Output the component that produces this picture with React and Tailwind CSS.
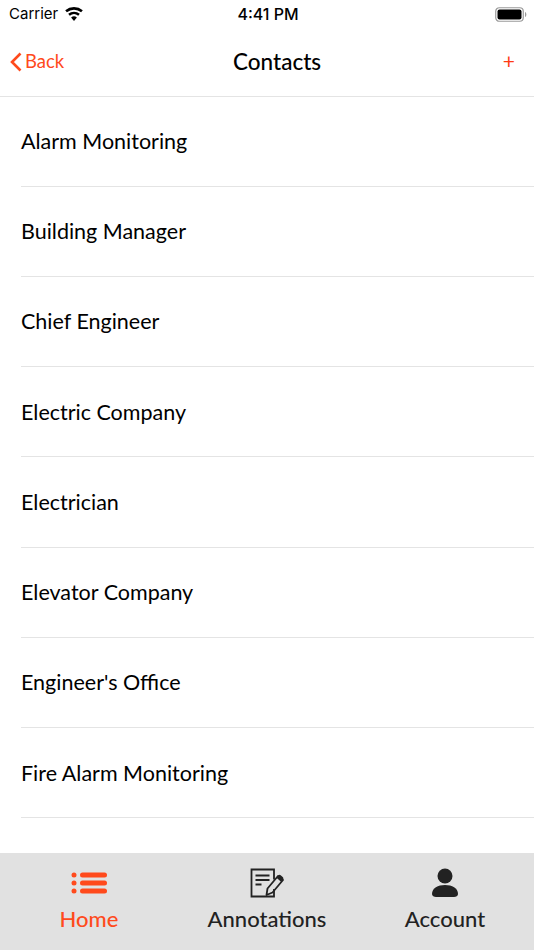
const CONTACTS = [
  "Alarm Monitoring",
  "Building Manager",
  "Chief Engineer",
  "Electric Company",
  "Electrician",
  "Elevator Company",
  "Engineer's Office",
  "Fire Alarm Monitoring",
];

function Wifi() {
  return (
    <svg width="20" height="14" viewBox="0 0 20 14" fill="#000">
      <path d="M10 14l-2.900-3.600a4.600 4.600 0 0 1 5.800 0L10 14z" />
      <path d="M5.800 8.800L4.200 6.800a9.200 9.200 0 0 1 11.600 0l-1.600 2a6.700 6.700 0 0 0-8.400 0z" />
      <path d="M2.900 5.200L1.200 3.200a13.900 13.900 0 0 1 17.600 0l-1.700 2a11.300 11.300 0 0 0-14.200 0z" />
    </svg>
  );
}

function Battery() {
  return (
    <svg width="32" height="15" viewBox="0 0 32 15">
      <rect x="0.750" y="0.750" width="27.500" height="13.500" rx="3.500" fill="none" stroke="#9a9a9a" strokeWidth="1.200" />
      <rect x="2.500" y="2.500" width="24" height="10" rx="2" fill="#000" />
      <path d="M30 5v5c.8-.3 1.400-1.300 1.400-2.500S30.800 5.300 30 5z" fill="#9a9a9a" />
    </svg>
  );
}

function ListIcon() {
  return (
    <svg width="36" height="22" viewBox="0 0 36 22" fill="#ff4a1c">
      <circle cx="3" cy="3" r="2.500" />
      <circle cx="3" cy="11" r="2.500" />
      <circle cx="3" cy="19" r="2.500" />
      <rect x="9" y="0.500" width="27" height="5" rx="2.500" />
      <rect x="9" y="8.500" width="27" height="5" rx="2.500" />
      <rect x="9" y="16.500" width="27" height="5" rx="2.500" />
    </svg>
  );
}

function NoteIcon() {
  return (
    <svg width="34" height="30" viewBox="0 0 34 30" fill="none" stroke="#222" strokeWidth="1.800">
      <path d="M24 21v7.500H1.500V1.500H24v10" />
      <path d="M5.500 7.500h14M5.500 12h14" strokeWidth="2" />
      <path d="M5.500 16.500h6" strokeWidth="2" />
      <path d="M16.500 27l1-6.500L28 8l5 4-10.500 12.500z" strokeWidth="1.800" strokeLinejoin="round" />
      <path d="M26.500 9.800L28.200 7.500a1.800 1.800 0 0 1 2.500-.2l2 1.700a1.800 1.800 0 0 1 .2 2.500L31 13.800z" fill="#222" stroke="none" />
    </svg>
  );
}

function PersonIcon() {
  return (
    <svg width="28" height="30" viewBox="0 0 28 30" fill="#222">
      <circle cx="14" cy="8" r="7.500" />
      <path d="M1 26c0-6 6-9 13-9s13 3 13 9c0 2-2 3-4 3H5c-2 0-4-1-4-3z" />
    </svg>
  );
}

export default function App() {
  return (
    <div className="flex h-[950px] w-[534px] flex-col overflow-hidden bg-white font-['Lato','Open_Sans',sans-serif]">
      <div className="grid h-[28px] grid-cols-3 items-center pl-[9px] pr-[7px] text-black">
        <div className="flex items-center gap-[6px] font-['Inter',sans-serif] text-[15px]">
          Carrier
          <Wifi />
        </div>
        <div className="text-center font-['Inter',sans-serif] text-[16px] font-medium">4:41 PM</div>
        <div className="flex justify-end">
          <Battery />
        </div>
      </div>

      <div className="flex h-[69px] items-center border-b border-[#e4e4e4] pl-[10px] pr-[19px]">
        <div className="flex w-[223px] flex-none items-center gap-[3px] text-[18.500px] text-[#ff4a1c]">
          <svg width="12" height="20" viewBox="0 0 12 20" fill="none" stroke="#ff4a1c" strokeWidth="2.600">
            <path d="M10.500 1.500L2 10l8.500 8.500" />
          </svg>
          Back
        </div>
        <div className="text-[22.500px] font-medium text-black">Contacts</div>
        <div className="ml-auto pb-[3px] text-[21px] leading-none text-[#ff3b14]">+</div>
      </div>

      <div className="mt-[-0.750px] min-h-0 flex-1 pl-[21px]">
        {CONTACTS.map((name) => (
          <div
            key={name}
            className="flex h-[90.250px] items-center border-b border-[#e4e4e4] text-[21.500px] text-black"
          >
            {name}
          </div>
        ))}
      </div>

      <div className="grid h-[97px] grid-cols-3 bg-[#e1e1e1] pt-[14px]">
        <div className="flex flex-col items-center gap-[3px] text-[22px] font-medium text-[#ff4a1c]">
          <div className="flex h-[32px] items-center"><ListIcon /></div>
          Home
        </div>
        <div className="flex flex-col items-center gap-[3px] text-[22px] font-medium text-[#222]">
          <div className="flex h-[32px] items-center"><NoteIcon /></div>
          Annotations
        </div>
        <div className="flex flex-col items-center gap-[3px] text-[22px] font-medium text-[#222]">
          <div className="flex h-[32px] items-center"><PersonIcon /></div>
          Account
        </div>
      </div>
    </div>
  );
}
